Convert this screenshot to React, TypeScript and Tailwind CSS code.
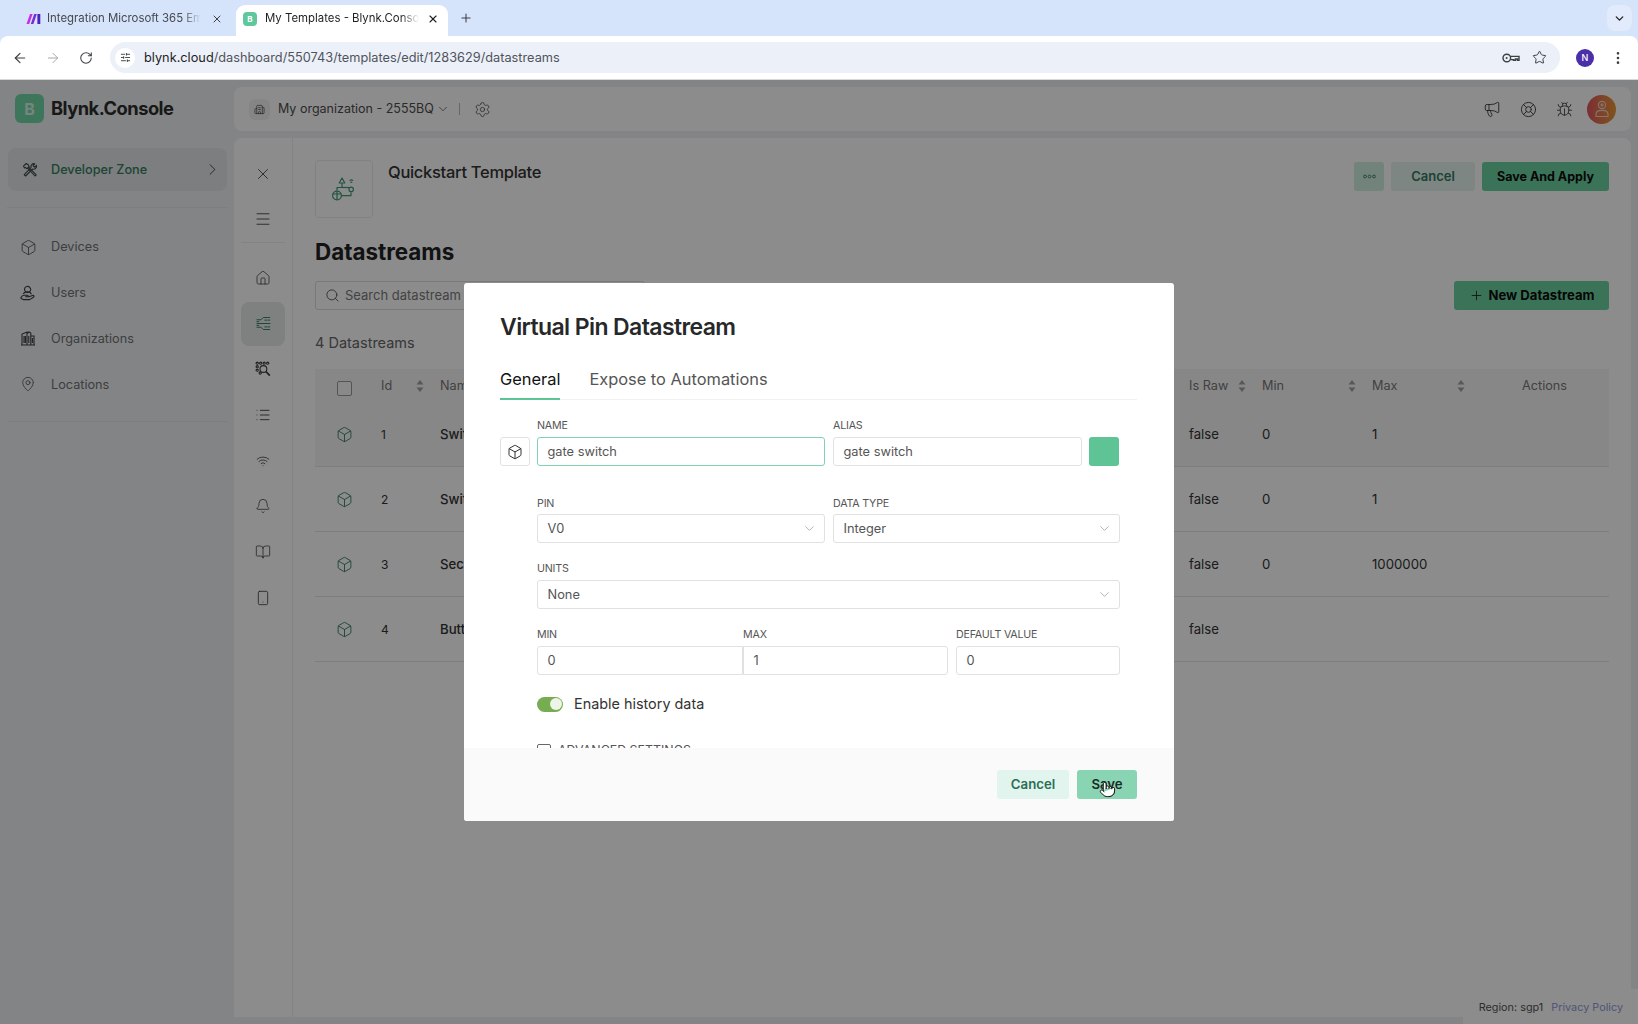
import { ArrowLeft, ArrowRight, RotateCw, X, Plus, ChevronDown, ChevronRight, Star, EllipsisVertical, Box, Menu, House, Bell, BookOpen, Smartphone, Wifi, List, Search, Settings, Megaphone, LifeBuoy, Bug, MapPin, Building2, Pointer, SlidersHorizontal } from "lucide-react";

const F = { fontFamily: "Inter, 'Liberation Sans', sans-serif" };

function MakeLogo() {
  return (
    <svg width="15" height="12" viewBox="0 0 15 12">
      <path d="M0.5 11 4 1h2.6L3.2 11z" fill="#c22fe6" />
      <path d="M4.8 11 8.2 1h2.6L7.4 11z" fill="#7a2bd8" />
      <path d="M11.4 1h2.9v10h-2.9z" fill="#4f20c0" />
    </svg>
  );
}

function KeyIcon() {
  return (
    <svg width="18" height="10" viewBox="0 0 18 10" fill="none" stroke="#3c4043" strokeWidth="1.4">
      <circle cx="4.8" cy="5" r="3.8" />
      <circle cx="4.6" cy="5" r="1" fill="#3c4043" stroke="none" />
      <path d="M8.6 3.4H17V7.2H15.4V6H13.4V7.2H11.4V6.6H8.6" />
    </svg>
  );
}

function ToolsIcon() {
  return (
    <svg width="16" height="16" viewBox="0 0 16 16" fill="none" stroke="#3a4a44" strokeWidth="1.1" strokeLinejoin="round">
      <path d="M1.5 4.2 4.2 1.5l2 1.3 1 1.8L5 6.7 3.4 5.4 2.6 6z" />
      <path d="M5.4 5.8 13 14l1.2-1.2L6.4 4.8" />
      <path d="M14.4 3.4 12.6 5.2 11 3.6 12.8 1.8a3 3 0 0 0-3.7 3.9L2.2 12.6 3.6 14l6.9-6.9a3 3 0 0 0 3.9-3.7z" />
    </svg>
  );
}

function UsersIcon() {
  return (
    <svg width="16" height="16" viewBox="0 0 16 16" fill="none" stroke="#3a3d40" strokeWidth="1.1" strokeLinejoin="round">
      <circle cx="7.6" cy="4.4" r="3" transform="rotate(-18 7.6 4.4)" />
      <path d="M3.4 9.2c.4-1.6 1.8-2.4 4-2.4s3.4 1 4 2.5" />
      <path d="M1 12.5c.6-1.5 2-2.2 3.4-2.2h3c1 0 1 1.4 0 1.4H5.6l3.4.1 3.6-1.3c1.3-.4 2 1 .9 1.7L9.6 14.6H3.4L1 13.4z" />
    </svg>
  );
}

function OrgIcon() {
  return (
    <svg width="16" height="16" viewBox="0 0 16 16" fill="none" stroke="#3a3d40" strokeWidth="1.1">
      <path d="M1 15h14M2 15V4l5-2v13M7 3.5l2-1.5 1.8 1v12M10.8 6H14v9M4 6v7M5.4 6v7M8.8 6v7M12.4 8v5" />
    </svg>
  );
}

function StreamIcon() {
  return (
    <svg width="15" height="15" viewBox="0 0 16 16" fill="none" stroke="#2f7d5d" strokeWidth="1" strokeLinecap="round" strokeLinejoin="round">
      <path d="M1 4h4.4l2.4-2.4h6.8M1 8h14M1 12h4.4l2.4 2.4h6.8" />
      <path d="M9.4 4.4h5.2M9.4 11.6h5.2M1 6h2M1 10h2" strokeDasharray="2 1.2" />
    </svg>
  );
}

function TemplatesSearchIcon() {
  return (
    <svg width="16" height="16" viewBox="0 0 16 16" fill="none" stroke="#3a3d40" strokeWidth="1.1">
      <circle cx="2.2" cy="2.2" r="1.1" />
      <circle cx="5.7" cy="2.2" r="1.1" />
      <circle cx="9.2" cy="2.2" r="1.1" />
      <circle cx="12.7" cy="2.2" r="1.1" />
      <circle cx="2.2" cy="5.7" r="1.1" />
      <circle cx="2.2" cy="9.2" r="1.1" />
      <circle cx="5.2" cy="12" r="1.1" />
      <circle cx="8.4" cy="8" r="3.4" />
      <path d="m11 10.6 3.8 4" strokeWidth="1.7" />
    </svg>
  );
}

function TemplateArt() {
  return (
    <svg width="26" height="26" viewBox="0 0 26 26" fill="none" stroke="#3f9a72" strokeWidth="1.2" strokeLinejoin="round">
      <path d="M11 2 8.2 7h5.6z" />
      <path d="M11 7v4.5H6v3" />
      <circle cx="6" cy="19.5" r="4.4" />
      <path d="M1.8 18h8.4M6 15.2v8.6" />
      <path d="M10.4 19.6h9.6v-3" />
      <circle cx="20.2" cy="13.4" r="2.2" />
      <path d="M11 11.5h7" />
      <path d="M18.6 4.6c1-.8 2.4-.8 3.4 0M19.4 6.6c.5-.4 1.3-.4 1.8 0" />
    </svg>
  );
}

function DotsIcon() {
  return (
    <svg width="13" height="5" viewBox="0 0 13 5" fill="none" stroke="#3d8a68" strokeWidth="1">
      <circle cx="2" cy="2.5" r="1.4" />
      <circle cx="6.5" cy="2.5" r="1.4" />
      <circle cx="11" cy="2.5" r="1.4" />
    </svg>
  );
}

function Sort() {
  return (
    <svg width="8" height="12" viewBox="0 0 8 12" className="absolute right-[16px] top-[11px]" fill="#a0a0a0">
      <path d="M4 0 7.5 4.6H.5zM4 12 .5 7.4h7z" />
    </svg>
  );
}

function Nav({ icon, label }: { icon: React.ReactNode; label: string }) {
  return (
    <div className="flex h-[20px] items-center">
      <div className="flex w-[51px] justify-center pl-[13px] pr-[8px]">{icon}</div>
      <span className="text-[12.7px] text-[#6f7275]">{label}</span>
    </div>
  );
}

function RailItem({ children, active }: { children: React.ReactNode; active?: boolean }) {
  return (
    <div className={active ? "flex h-[44px] w-[44px] items-center justify-center rounded-lg bg-[#e8e9ea]" : "flex h-[44px] w-[44px] items-center justify-center"}>
      {children}
    </div>
  );
}

const cols = "grid grid-cols-[66px_59px_749px_73px_110px_109px_127px]";

function Row({ id, name, raw, min, max, active }: { id: string; name: string; raw: string; min?: string; max?: string; active?: boolean }) {
  return (
    <div className={`${cols} h-[65px] items-center border-b border-[#e5e5e5] pt-[1px] text-[13.2px] text-[#333] ${active ? "bg-[#f6f6f6]" : ""}`}>
      <div className="flex justify-center pr-[8px]">
        <Box size={17} strokeWidth={1.3} className="text-[#358060]" />
      </div>
      <div className="text-[12px]">{id}</div>
      <div className="font-medium">{name}</div>
      <div>{raw}</div>
      <div>{min}</div>
      <div>{max}</div>
      <div />
    </div>
  );
}

function Label({ children }: { children: React.ReactNode }) {
  return <div className="h-[14px] pt-[1px] text-[10.7px] leading-[14px] tracking-[-0.2px] text-[#555]">{children}</div>;
}

function Field({ value, cls, border = "border-[#e1e1e1]" }: { value: string; cls: string; border?: string }) {
  return <div className={`flex h-[29px] items-center rounded-[3px] border px-[9.5px] text-[12.8px] text-[#555] ${border} ${cls}`}>{value}</div>;
}

function SelectBox({ value, cls }: { value: string; cls: string }) {
  return (
    <div className={`flex h-[29px] items-center justify-between rounded-[3px] border border-[#e1e1e1] pl-[9.5px] pr-[7px] text-[12.8px] text-[#555] ${cls}`}>
      <span>{value}</span>
      <ChevronDown size={15} strokeWidth={0.9} className="text-[#777]" />
    </div>
  );
}

export default function App() {
  return (
    <div style={F} className="flex h-[1024px] w-[1638px] flex-col overflow-hidden bg-[#d5e3fb]">
      {/* tab strip */}
      <div className="flex h-[36px] shrink-0 items-end pl-[16px] pr-[6px] text-[11.4px] text-[#1f1f1f]">
        <div className="flex h-[31px] w-[220px] items-center pb-[4px] pl-[10px] pr-[13px] text-[#46494d]">
          <MakeLogo />
          <span className="ml-[6px] w-[154px] overflow-hidden whitespace-nowrap [mask-image:linear-gradient(to_right,black_88%,transparent)]">Integration Microsoft 365 Email</span>
          <X size={12} strokeWidth={2} className="ml-auto text-[#3c4043]" />
        </div>
        <div className="flex h-[31px] w-[212px] items-center rounded-t-[9px] bg-white pb-[4px] pl-[7px] pr-[9px]">
          <div className="flex h-[14px] w-[14px] items-center justify-center rounded-[4px] bg-[#5fc79c] text-[8px] font-bold text-white">B</div>
          <span className="ml-[8px] w-[154px] overflow-hidden whitespace-nowrap [mask-image:linear-gradient(to_right,black_88%,transparent)]">My Templates - Blynk.Console</span>
          <X size={12} strokeWidth={2.2} className="ml-auto" />
        </div>
        <Plus size={14} strokeWidth={1.8} className="mb-[11px] ml-[11px] text-[#3c4043]" />
        <div className="mb-[5px] ml-auto flex h-[26px] w-[25px] items-center justify-center rounded-lg bg-[#e2ebfb]">
          <ChevronDown size={13} strokeWidth={2.4} />
        </div>
      </div>
      {/* toolbar */}
      <div className="flex h-[43px] shrink-0 items-center rounded-t-[8px] bg-white pl-[12px] pr-[8px] text-[#3c4043]">
        <ArrowLeft size={16} strokeWidth={1.8} />
        <ArrowRight size={16} strokeWidth={1.5} className="ml-[17px] text-[#a6a8ab]" />
        <RotateCw size={14} strokeWidth={1.8} className="ml-[18px]" />
        <div className="ml-[17px] flex h-[31px] w-[1450px] items-center rounded-full bg-[#ecf0f9] pl-[5px] pr-[13px]">
          <div className="flex h-[20px] w-[20px] items-center justify-center rounded-full bg-white">
            <SlidersHorizontal size={11} strokeWidth={2} />
          </div>
          <span className="ml-[9px] text-[12.75px] text-[#1f1f1f]">
            blynk.cloud<span className="text-[#50545a]">/dashboard/550743/templates/edit/1283629/datastreams</span>
          </span>
          <div className="ml-auto flex items-center gap-[12px]">
            <KeyIcon />
            <Star size={15} strokeWidth={1.6} />
          </div>
        </div>
        <div className="ml-[16px] flex h-[18px] w-[18px] items-center justify-center rounded-full bg-[#4a2fa8] text-[9px] font-medium text-white">N</div>
        <EllipsisVertical size={16} strokeWidth={2} className="ml-[16px]" />
      </div>

      {/* page */}
      <div className="relative flex min-h-0 flex-1 border-t border-[#d8d8d8] bg-[#eff1f3]">
        {/* sidebar */}
        <aside className="flex w-[234px] shrink-0 flex-col">
          <div className="ml-[15px] mt-[14px] flex h-[29px] items-center">
            <div className="flex h-[29px] w-[29px] items-center justify-center rounded-[6px] bg-[#6fd8a6] text-[16px] font-bold text-[#d8f3e6]">B</div>
            <span className="ml-[7px] text-[18.3px] font-bold tracking-[-0.5px] text-[#2d2d2d]">Blynk.Console</span>
          </div>
          <div className="ml-[8px] mt-[25px] flex h-[43px] w-[219px] items-center rounded-[8px] bg-[#e3e5e8]">
            <div className="flex w-[43px] justify-center"><ToolsIcon /></div>
            <span className="text-[12.7px] font-medium text-[#337f5f]">Developer Zone</span>
            <ChevronRight size={19} strokeWidth={1.1} className="ml-auto mr-[5px] text-[#333]" />
          </div>
          <div className="mx-[7px] mt-[16px] h-px bg-[#e2e4e6]" />
          <div className="mt-[29px] flex flex-col gap-[25.7px]">
            <Nav icon={<Box size={17} strokeWidth={1.2} className="text-[#4f5255]" />} label="Devices" />
            <Nav icon={<UsersIcon />} label="Users" />
            <Nav icon={<OrgIcon />} label="Organizations" />
            <Nav icon={<MapPin size={16} strokeWidth={1.2} className="text-[#4f5255]" />} label="Locations" />
          </div>
          <div className="mx-[7px] mt-[27px] h-px bg-[#e2e4e6]" />
        </aside>

        {/* main column */}
        <div className="flex min-w-0 flex-1 flex-col pb-[7px] pr-[7px] pt-[7px]">
          <div className="flex h-[44px] shrink-0 items-center rounded-[8px] bg-white pl-[15px] pr-[15px]">
            <div className="flex h-[21px] w-[21px] items-center justify-center rounded-[6px] bg-[#f3f3f3]">
              <Building2 size={11} strokeWidth={1.6} className="text-[#444]" />
            </div>
            <span className="ml-[8px] text-[12.5px] text-[#4d4d4d]">My organization - 2555BQ</span>
            <ChevronDown size={14} strokeWidth={1.2} className="ml-[2px] text-[#444]" />
            <div className="ml-[9px] h-[12px] w-px bg-[#bbb]" />
            <Settings size={17} strokeWidth={1.2} className="ml-[14px] text-[#555]" />
            <div className="ml-auto flex items-center">
              <Megaphone size={18} strokeWidth={1.2} className="mr-[19px] text-[#3a3a3a]" />
              <LifeBuoy size={17} strokeWidth={1.3} className="mr-[19px] text-[#3a3a3a]" />
              <Bug size={17} strokeWidth={1.2} className="mr-[14px] text-[#3a3a3a]" />
              <div className="flex h-[29px] w-[29px] items-center justify-center rounded-full bg-gradient-to-r from-[#e0535d] to-[#e9982f]">
                <svg width="16" height="18" viewBox="0 0 16 18" fill="none" stroke="#f4d5c5" strokeWidth="1.1">
                  <circle cx="8" cy="5" r="3.6" />
                  <path d="M8 3v4M6 5h4M2 16.5v-2.2C2 11.8 4.4 10.4 8 10.4s6 1.4 6 3.9v2.2z" />
                </svg>
              </div>
            </div>
          </div>

          <div className="mt-[7px] flex min-h-0 flex-1 rounded-t-[8px] bg-white">
            {/* rail */}
            <div className="flex w-[59px] shrink-0 flex-col items-center border-r border-[#f1f1f1] pt-[27px] text-[#444]">
              <X size={18} strokeWidth={1.2} />
              <Menu size={18} strokeWidth={1.2} className="mt-[27px]" />
              <div className="mt-[14px] h-px w-[44px] bg-[#eeeeee]" />
              <div className="mt-[13px] flex flex-col gap-[1.7px]">
                <RailItem><House size={16} strokeWidth={1.2} /></RailItem>
                <RailItem active><StreamIcon /></RailItem>
                <RailItem><TemplatesSearchIcon /></RailItem>
                <RailItem><List size={16} strokeWidth={1.4} /></RailItem>
                <RailItem><Wifi size={14} strokeWidth={1.4} /></RailItem>
                <RailItem><Bell size={16} strokeWidth={1.2} /></RailItem>
                <RailItem><BookOpen size={16} strokeWidth={1.2} /></RailItem>
                <RailItem><Smartphone size={16} strokeWidth={1.3} /></RailItem>
              </div>
            </div>
            {/* content */}
            <div className="flex min-w-0 flex-1 flex-col pl-[22px] pr-[22px] pt-[22px]">
              <div className="flex h-[58px] shrink-0 items-start">
                <div className="flex h-[58px] w-[58px] items-center justify-center rounded-[4px] border border-[#ececec]"><TemplateArt /></div>
                <h2 className="ml-[15px] text-[16.5px] font-medium tracking-[-0.3px] text-[#333]">Quickstart Template</h2>
                <div className="ml-auto mt-[2px] flex gap-[7px] text-[13px] font-semibold">
                  <div className="flex h-[29px] w-[30px] items-center justify-center rounded-[3px] bg-[#cfeee0]"><DotsIcon /></div>
                  <div className="flex h-[29px] w-[84px] items-center justify-center rounded-[3px] bg-[#e4f4ee] pt-[1px] text-[#357a5d]">Cancel</div>
                  <div className="flex h-[29px] w-[127px] items-center justify-center rounded-[3px] bg-[#6cd2a2] pt-[1px] text-[12.5px] font-bold text-[#0c0c0c]">Save And Apply</div>
                </div>
              </div>
              <h1 className="mt-[18px] h-[32px] text-[22.4px] font-bold leading-[32px] text-[#222]">Datastreams</h1>
              <div className="mt-[13px] flex h-[29px] shrink-0 items-center justify-between">
                <div className="flex h-[29px] w-[330px] items-center rounded-[3px] border border-[#dcdcdc] pl-[9px] text-[13px] text-[#7a7a7a]">
                  <Search size={15} strokeWidth={1.3} className="mr-[5px] text-[#444]" />
                  Search datastream
                </div>
                <div className="flex h-[29px] w-[155px] items-center justify-center rounded-[3px] bg-[#6cd2a2] text-[13.1px] font-bold text-[#0c0c0c]">
                  <Plus size={15} strokeWidth={1.2} className="mr-[5px]" />
                  New Datastream
                </div>
              </div>
              <div className="mt-[23px] h-[20px] text-[14.5px] leading-[20px] text-[#666]">4 Datastreams</div>
              <div className="mt-[16px]">
                <div className={`${cols} h-[33px] bg-[#f6f6f6] pb-[1px] text-[12.7px] text-[#777]`}>
                  <div className="flex pl-[22px] pt-[12px]">
                    <div className="h-[15px] w-[15px] rounded-[2px] border border-[#9a9a9a] bg-[#f9f9f9]" />
                  </div>
                  <div className="relative pt-[7px]">Id<Sort /></div>
                  <div className="pt-[7px]">Name</div>
                  <div className="relative pt-[7px]">Is Raw<Sort /></div>
                  <div className="relative pt-[7px]">Min<Sort /></div>
                  <div className="relative pt-[7px]">Max<Sort /></div>
                  <div className="pt-[7px] text-center">Actions</div>
                </div>
                <Row id="1" name="Switch 1" raw="false" min="0" max="1" active />
                <Row id="2" name="Switch 2" raw="false" min="0" max="1" />
                <Row id="3" name="Seconds" raw="false" min="0" max="1000000" />
                <Row id="4" name="Button" raw="false" />
              </div>
            </div>
          </div>
        </div>

        {/* footer patch */}
        <div className="absolute bottom-0 right-0 flex h-[35px] w-[175px] items-center justify-end gap-[8px] bg-white pr-[15px] pt-[2px] text-[10.85px]">
          <span className="text-[#555]">Region: sgp1</span>
          <span className="text-[#8f9cd6]">Privacy Policy</span>
        </div>

        {/* overlay */}
        <div className="absolute inset-0 bg-black/45" />

        {/* modal */}
        <div className="absolute left-[464px] top-[203px] flex h-[538px] w-[710px] flex-col overflow-hidden rounded-[3px] bg-white">
          <div className="h-[465px] shrink-0 overflow-hidden pl-[36px] pr-[37px] pt-[28px]">
            <h3 className="h-[32px] text-[23px] font-semibold leading-[32px] tracking-[-0.6px] text-[#27282a]">Virtual Pin Datastream</h3>
            <div className="mt-[16px] flex h-[41px] gap-[29px] border-b border-[#f1f1f1] text-[16.4px] leading-[40px]">
              <div className="h-[41px] border-b-2 border-[#5bc595] text-[#111]">General</div>
              <div className="text-[#555]">Expose to Automations</div>
            </div>
            <div className="mt-[18px] flex items-end">
              <div className="flex h-[29px] w-[30px] items-center justify-center rounded-[3px] border border-[#e1e1e1]">
                <Box size={16} strokeWidth={1.4} className="text-[#222]" />
              </div>
              <div className="ml-[7px] w-[288px]">
                <Label>NAME</Label>
                <Field value="gate switch" cls="mt-[5px]" border="border-[#7fd3ae]" />
              </div>
              <div className="ml-[8px] w-[249px]">
                <Label>ALIAS</Label>
                <Field value="gate switch" cls="mt-[5px]" />
              </div>
              <div className="ml-[7px] h-[29px] w-[30px] rounded-[3px] bg-[#5fc495]" />
            </div>
            <div className="ml-[37px] w-[583px]">
              <div className="mt-[30px] flex gap-[8px]">
                <div className="w-[288px]">
                  <Label>PIN</Label>
                  <SelectBox value="V0" cls="mt-[4px]" />
                </div>
                <div className="w-[287px]">
                  <Label>DATA TYPE</Label>
                  <SelectBox value="Integer" cls="mt-[4px]" />
                </div>
              </div>
              <div className="mt-[18px]">
                <Label>UNITS</Label>
                <SelectBox value="None" cls="mt-[5px]" />
              </div>
              <div className="mt-[18px] flex">
                <div className="w-[206px]">
                  <Label>MIN</Label>
                  <Field value="0" cls="mt-[5px] rounded-r-none" />
                </div>
                <div className="w-[205px]">
                  <Label>MAX</Label>
                  <Field value="1" cls="mt-[5px] rounded-l-none" />
                </div>
                <div className="ml-[8px] w-[164px]">
                  <Label>DEFAULT VALUE</Label>
                  <Field value="0" cls="mt-[5px]" />
                </div>
              </div>
              <div className="mt-[21px] flex h-[16px] items-center">
                <div className="flex h-[15px] w-[26px] items-center justify-end rounded-full bg-[#77ad51] pr-[1.5px]">
                  <div className="h-[12px] w-[12px] rounded-full bg-[#eef5e8]" />
                </div>
                <span className="ml-[11px] text-[14.4px] text-[#333]">Enable history data</span>
              </div>
              <div className="mt-[30px] flex items-center">
                <div className="h-[14px] w-[14px] rounded-[2px] border border-[#666]" />
                <span className="ml-[7px] text-[12.4px] text-[#555]">ADVANCED SETTINGS</span>
              </div>
            </div>
          </div>
          <div className="flex flex-1 items-start justify-end gap-[8px] bg-[#fafafa] pr-[37px] pt-[22px] text-[13.2px] font-semibold">
            <div className="flex h-[29px] w-[72px] items-center justify-center rounded-[3px] bg-[#e1f4ed] text-[#2a6e55]">Cancel</div>
            <div className="relative flex h-[29px] w-[60px] items-center justify-center rounded-[3px] bg-[#88d4b3] text-[#1d2b26]">
              Save
              <Pointer size={17} strokeWidth={1.4} fill="#ffffff" className="absolute left-[22px] top-[11px] text-[#111]" />
            </div>
          </div>
        </div>
      </div>
    </div>
  );
}
